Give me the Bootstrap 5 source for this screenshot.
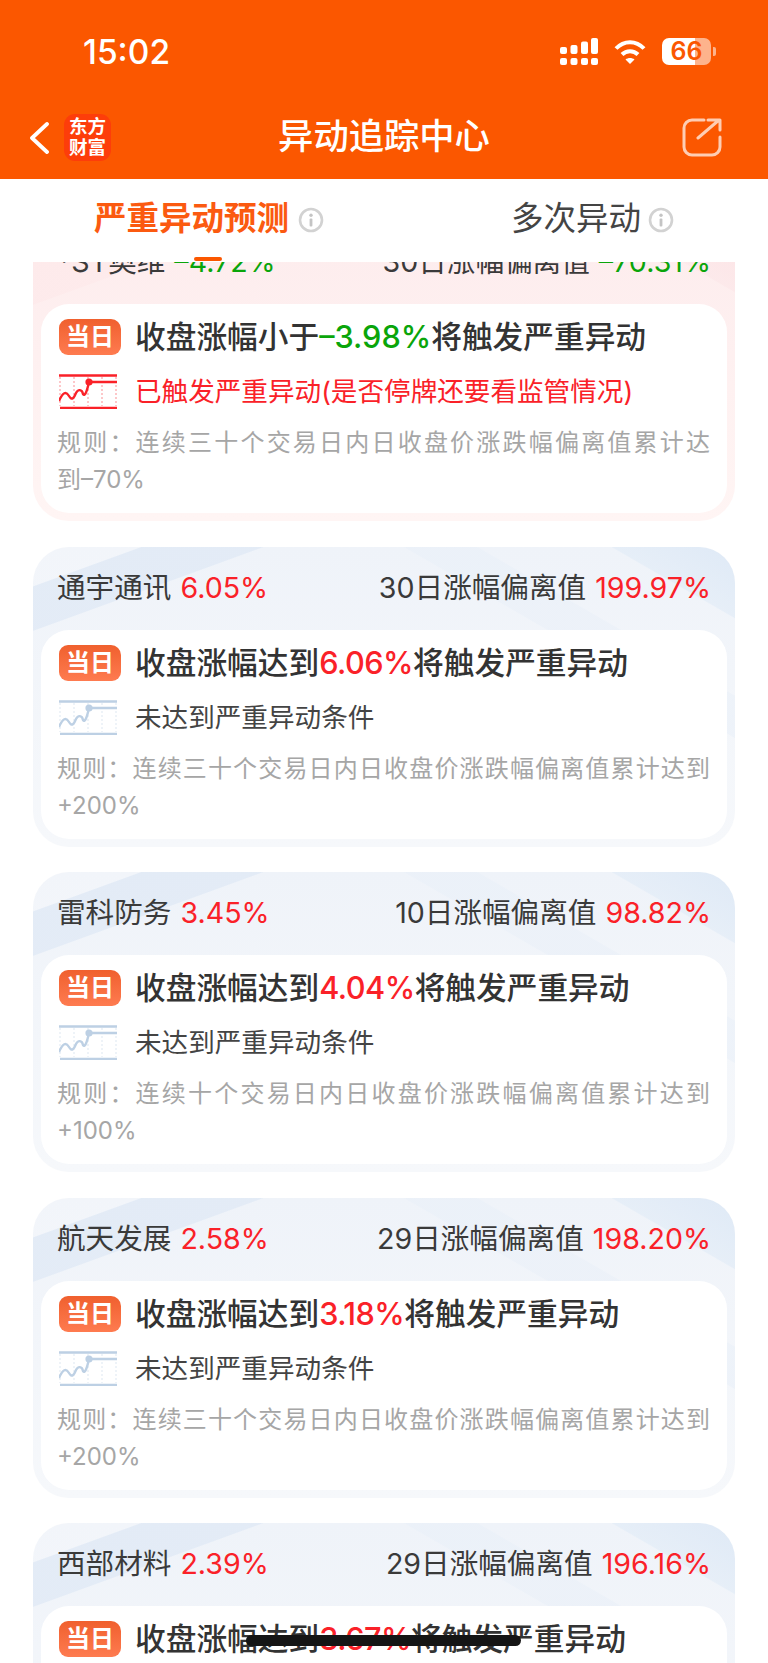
<!DOCTYPE html>
<html lang="zh">
<head>
  <meta charset="UTF-8">
  <meta name="viewport" content="width=device-width, initial-scale=1.0">
  <title>异动追踪中心</title>
  <link href="https://cdn.jsdelivr.net/npm/bootstrap@5.3.0/dist/css/bootstrap.min.css" rel="stylesheet">
  <style>
    body {
      height: 1663px;
      overflow: hidden;
      background: #fff;
      font-family: Inter, "Noto Sans CJK SC", sans-serif;
      color: #333;
    }
    .app-top { background: #fb5700; height: 179px; color: #fff; }
    .status-row { height: 102px; padding: 0 52px 0 83px; }
    .clock { font-size: 33.5px; font-weight: 500; line-height: 104px; }
    .batt { width: 49px; height: 27px; border-radius: 7px; background: linear-gradient(90deg, #fff 0 67%, rgba(255,255,255,.55) 67%); color: #fb5700; font-size: 25px; font-weight: 600; line-height: 27px; text-align: center; }
    .batt-nub { width: 3px; height: 9px; border-radius: 0 2px 2px 0; background: rgba(255,255,255,.55); margin-left: 2px; }
    .nav-row { height: 77px; padding: 0 46px 6px 29px; position: relative; }
    .brand-box { width: 47px; height: 47px; margin-left: 15px; border-radius: 11px; background: #fd3d0a; font-size: 18.5px; font-weight: 700; line-height: 21px; text-align: center; padding-top: 2px; }
    .page-name { position: absolute; left: 0; right: 0; top: 17px; text-align: center; font-size: 35.3px; font-weight: 500; line-height: 1; }
    .tab-row { height: 81px; margin-bottom: 2px; padding-left: 94px; gap: 187px; position: relative; }
    .tab-one { font-size: 32.5px; font-weight: 700; color: #fb5a10; }
    .tab-two { font-size: 32.5px; color: #444; }
    .tab-row svg { margin-left: 9px; }
    .tab-row .tab-two svg { margin-left: 7px; }
    .tab-mark { position: absolute; left: 194px; bottom: -1px; width: 28px; height: 4px; border-radius: 2px; background: #fb5700; z-index: 3; }
    .stock-list { height: 1401px; overflow: hidden; padding: 0 33px; }
    .stock-list > :first-child { margin-top: -41px; }
    .stock-card { height: 300px; margin-bottom: 25.6px; padding: 0 8px 8px; border-radius: 36px; }
    .blue-card {
      background:
        linear-gradient(160deg, rgba(255,255,255,.18) 0 7%, rgba(222,232,245,.7) 7.2% 15%, transparent 15.2%),
        linear-gradient(210deg, rgba(222,233,246,.95) 0, rgba(226,236,247,.7) 10%, transparent 10.2%),
        linear-gradient(210deg, transparent 0 21%, rgba(232,239,248,.5) 21.2% 27%, transparent 27.2%),
        linear-gradient(180deg, #eff3f9, #f6f8fb);
    }
    .pink-card {
      background:
        linear-gradient(160deg, rgba(253,232,233,.6) 0 15%, transparent 15.2%),
        linear-gradient(210deg, rgba(252,226,228,.9) 0, rgba(252,230,232,.6) 10%, transparent 10.2%),
        linear-gradient(180deg, #fdeced, #fff5f4);
    }
    .card-head { height: 83px; padding: 0 16px; font-size: 28.6px; color: #3a3a3a; }
    .card-head span { margin-left: 1px; }
    .card-body-box { height: 209px; background: #fff; border-radius: 28px; padding: 15px 17px 0 16px; }
    .today-tag { width: 62px; height: 36px; margin-left: 2px; border-radius: 9px 10px 9px 9px; background: linear-gradient(180deg, #f0602e, #fe7b50); color: #fff; font-size: 24px; font-weight: 700; line-height: 36px; text-align: center; flex: none; }
    .alert-line { font-size: 30.7px; font-weight: 500; line-height: 36px; margin-left: 14px; white-space: nowrap; }
    .alert-line .up-val { letter-spacing: -.5px; }
    .state-row { margin-top: 19px; height: 35px; padding-left: 2px; }
    .state-row svg { flex: none; }
    .state-text { font-size: 26.6px; line-height: 35px; margin-left: 18px; color: #444; white-space: nowrap; }
    .rule-text { margin-top: 15px; font-size: 24px; line-height: 37px; color: #a6a6a6; text-align: justify; }
    .up-val { color: #fa2128; }
    .down-val { color: #0aa50a; }
    .scrawl { position: absolute; left: 246px; top: 1635px; width: 275px; height: 11px; border-radius: 6px; background: #151515; z-index: 5; }
  </style>
</head>
<body class="position-relative">

<svg width="0" height="0" class="position-absolute">
  <symbol id="trend" viewBox="0 0 58 35">
    <g fill="none" stroke="currentColor">
      <path d="M0 1.5H58M1 34H58" stroke-width="2.5"/>
      <path d="M1 3V32M15 3V32M29 3V32M43 3V32M57 3V32" stroke-width="1" stroke-dasharray="2 2" opacity=".5"/>
      <path d="M0 27C4 18 7 17 10 22C13 27 15 24 17 19C19 15 23 15 24 20C26 23 28 17 30 8H58" stroke-width="2.4"/>
    </g>
    <circle cx="30" cy="8" r="3.6" fill="currentColor"/>
  </symbol>
  <symbol id="tip" viewBox="0 0 26 26">
    <circle cx="13" cy="13" r="11" fill="none" stroke="#d2d2d2" stroke-width="2.6"/>
    <circle cx="13" cy="8.2" r="1.7" fill="#c4c4c4"/>
    <rect x="11.6" y="11.4" width="2.8" height="8" rx="1" fill="#c4c4c4"/>
  </symbol>
</svg>

<div class="app-top">
  <div class="status-row d-flex justify-content-between">
    <div class="clock">15:02</div>
    <div class="d-flex align-items-center">
      <svg width="38" height="27" viewBox="0 0 38 27" fill="#fff">
        <rect x="0" y="9" width="7" height="7" rx="2"/><rect x="0" y="20" width="7" height="7" rx="2"/>
        <rect x="10.5" y="7" width="7" height="9" rx="2"/><rect x="10.5" y="20" width="7" height="7" rx="2"/>
        <rect x="21" y="3.500" width="7" height="12.500" rx="2"/><rect x="21" y="20" width="7" height="7" rx="2"/>
        <rect x="31" y="0" width="7" height="16" rx="2"/><rect x="31" y="20" width="7" height="7" rx="2"/>
      </svg>
      <svg class="ms-3" width="32" height="25" viewBox="0 0 32 25">
        <g fill="none" stroke="#fff" stroke-width="4">
          <path d="M2 9.500C10 1 22 1 30 9.500"/>
          <path d="M8 15.500C12.500 11 19.500 11 24 15.500"/>
        </g>
        <path d="M11.500 20.500C14 18.500 18 18.500 20.500 20.500L16 25Z" fill="#fff"/>
      </svg>
      <div class="batt ms-3">66</div>
      <div class="batt-nub"></div>
    </div>
  </div>
  <div class="nav-row d-flex align-items-center">
    <svg width="20" height="32" viewBox="0 0 20 32" fill="none" stroke="#fff" stroke-width="3.800" stroke-linecap="round" stroke-linejoin="round"><path d="M18 2L3 16L18 30"/></svg>
    <div class="brand-box">东方<br>财富</div>
    <div class="page-name">异动追踪中心</div>
    <svg class="ms-auto" width="40" height="39" viewBox="0 0 40 39" fill="none" stroke="#fff" stroke-opacity=".7" stroke-width="3" stroke-linecap="round" stroke-linejoin="round">
      <path d="M22 2H10A8 8 0 0 0 2 10V29A8 8 0 0 0 10 37H30A8 8 0 0 0 38 29V19"/>
      <path d="M16 20L37 2M26 2H38V12"/>
    </svg>
  </div>
</div>

<div class="tab-row d-flex align-items-center">
  <div class="d-flex align-items-center tab-one">严重异动预测<svg width="26" height="26"><use href="#tip"/></svg></div>
  <div class="d-flex align-items-center tab-two">多次异动<svg width="26" height="26"><use href="#tip"/></svg></div>
  <div class="tab-mark"></div>
</div>

<div class="stock-list">

  <div class="stock-card pink-card">
    <div class="card-head d-flex justify-content-between align-items-center">
      <div>*ST奥维 <span class="down-val">–4.72%</span></div>
      <div>30日涨幅偏离值 <span class="down-val">–70.31%</span></div>
    </div>
    <div class="card-body-box">
      <div class="d-flex align-items-center"><div class="today-tag">当日</div><div class="alert-line">收盘涨幅小于<span class="down-val">–3.98%</span>将触发严重异动</div></div>
      <div class="state-row d-flex align-items-center"><svg class="up-val" width="58" height="35"><use href="#trend"/></svg><div class="state-text up-val">已触发严重异动(是否停牌还要看监管情况)</div></div>
      <div class="rule-text">规则&#xFF1A;连续三十个交易日内日收盘价涨跌幅偏离值累计达<span class="text-nowrap">到–70%</span></div>
    </div>
  </div>

  <div class="stock-card blue-card">
    <div class="card-head d-flex justify-content-between align-items-center">
      <div>通宇通讯 <span class="up-val">6.05%</span></div>
      <div>30日涨幅偏离值 <span class="up-val">199.97%</span></div>
    </div>
    <div class="card-body-box">
      <div class="d-flex align-items-center"><div class="today-tag">当日</div><div class="alert-line">收盘涨幅达到<span class="up-val">6.06%</span>将触发严重异动</div></div>
      <div class="state-row d-flex align-items-center"><svg width="58" height="35" color="#bdd0e4"><use href="#trend"/></svg><div class="state-text">未达到严重异动条件</div></div>
      <div class="rule-text">规则&#xFF1A;连续三十个交易日内日收盘价涨跌幅偏离值累计达到<span class="text-nowrap">+200%</span></div>
    </div>
  </div>

  <div class="stock-card blue-card">
    <div class="card-head d-flex justify-content-between align-items-center">
      <div>雷科防务 <span class="up-val">3.45%</span></div>
      <div>10日涨幅偏离值 <span class="up-val">98.82%</span></div>
    </div>
    <div class="card-body-box">
      <div class="d-flex align-items-center"><div class="today-tag">当日</div><div class="alert-line">收盘涨幅达到<span class="up-val">4.04%</span>将触发严重异动</div></div>
      <div class="state-row d-flex align-items-center"><svg width="58" height="35" color="#bdd0e4"><use href="#trend"/></svg><div class="state-text">未达到严重异动条件</div></div>
      <div class="rule-text">规则&#xFF1A;连续十个交易日内日收盘价涨跌幅偏离值累计达到<span class="text-nowrap">+100%</span></div>
    </div>
  </div>

  <div class="stock-card blue-card">
    <div class="card-head d-flex justify-content-between align-items-center">
      <div>航天发展 <span class="up-val">2.58%</span></div>
      <div>29日涨幅偏离值 <span class="up-val">198.20%</span></div>
    </div>
    <div class="card-body-box">
      <div class="d-flex align-items-center"><div class="today-tag">当日</div><div class="alert-line">收盘涨幅达到<span class="up-val">3.18%</span>将触发严重异动</div></div>
      <div class="state-row d-flex align-items-center"><svg width="58" height="35" color="#bdd0e4"><use href="#trend"/></svg><div class="state-text">未达到严重异动条件</div></div>
      <div class="rule-text">规则&#xFF1A;连续三十个交易日内日收盘价涨跌幅偏离值累计达到<span class="text-nowrap">+200%</span></div>
    </div>
  </div>

  <div class="stock-card blue-card">
    <div class="card-head d-flex justify-content-between align-items-center">
      <div>西部材料 <span class="up-val">2.39%</span></div>
      <div>29日涨幅偏离值 <span class="up-val">196.16%</span></div>
    </div>
    <div class="card-body-box">
      <div class="d-flex align-items-center"><div class="today-tag">当日</div><div class="alert-line">收盘涨幅达到<span class="up-val">3.67%</span>将触发严重异动</div></div>
    </div>
  </div>

</div>

<div class="scrawl"></div>

<script src="https://cdn.jsdelivr.net/npm/bootstrap@5.3.0/dist/js/bootstrap.bundle.min.js"></script>
</body>
</html>
